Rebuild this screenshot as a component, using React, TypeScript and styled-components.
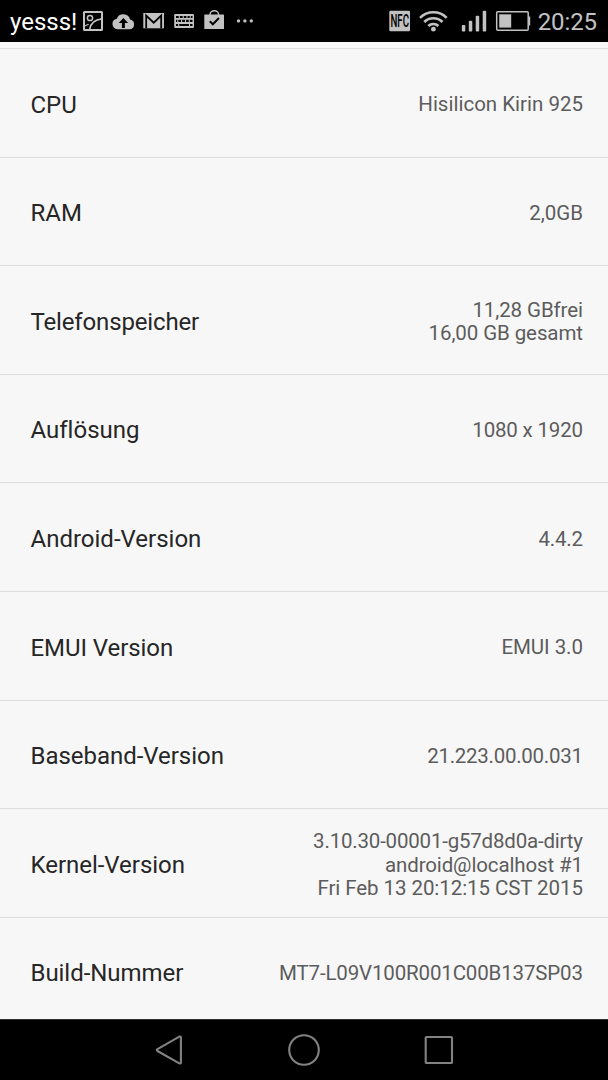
import React from 'react';
import styled, { createGlobalStyle } from 'styled-components';

const GlobalStyle = createGlobalStyle`
  * { box-sizing: border-box; }
  body {
    margin: 0;
    background: #f7f7f7;
    font-family: Roboto, "Noto Sans", sans-serif;
    font-variant-ligatures: none;
  }
`;

const Screen = styled.div`
  display: flex;
  flex-direction: column;
  width: 608px;
  height: 1080px;
  overflow: hidden;
  background: #f7f7f7;
`;

const StatusBar = styled.header`
  display: flex;
  flex: none;
  justify-content: space-between;
  height: 42px;
  padding: 0 11px 0 10px;
  background: #000;
`;

const StatusGroup = styled.div`
  display: flex;
  align-items: center;
  height: 42px;
`;

const Carrier = styled.span`
  width: 69px;
  padding-top: 2px;
  color: #fff;
  font-size: 24px;
  line-height: 42px;
  white-space: nowrap;
`;

const Clock = styled.span`
  width: 60px;
  padding-top: 2px;
  color: #c2c2c2;
  font-size: 24px;
  line-height: 42px;
  letter-spacing: -0.1px;
  text-align: right;
  white-space: nowrap;
`;

const Icon = styled.svg`
  display: block;
  flex: none;
`;

const NfcText = styled.text`
  font-family: Roboto, sans-serif;
  font-size: 18px;
  font-weight: 500;
`;

const Settings = styled.main`
  flex: 1;
  min-height: 0;
  padding-top: 6px;
  overflow: hidden;
`;

const Row = styled.section`
  display: flex;
  align-items: center;
  justify-content: space-between;
  height: 108.6px;
  padding: 3.6px 25px 0 30.5px;
  border-top: 1px solid #dedede;
`;

const Label = styled.span<{ $spacing: number }>`
  color: #262626;
  font-size: 24px;
  line-height: 28px;
  letter-spacing: ${(p) => p.$spacing}px;
  white-space: nowrap;
`;

const Values = styled.div`
  display: flex;
  flex-direction: column;
  align-items: flex-end;
  padding-top: 1px;
`;

const Value = styled.span<{ $spacing: number }>`
  color: #5c5c5c;
  font-size: 20.5px;
  line-height: 23.5px;
  letter-spacing: ${(p) => p.$spacing}px;
  margin-right: ${(p) => -p.$spacing}px;
  white-space: nowrap;
`;

const NavBar = styled.nav`
  display: flex;
  flex: none;
  align-items: center;
  justify-content: center;
  gap: 103px;
  height: 61px;
  border-top: 1px solid #303030;
  background: #000;
`;

type Line = [text: string, spacing: number];

const rows: { label: Line; values: Line[] }[] = [
  { label: ['CPU', 0], values: [['Hisilicon Kirin 925', 0]] },
  { label: ['RAM', 0], values: [['2,0GB', 0]] },
  { label: ['Telefonspeicher', -0.15], values: [['11,28 GBfrei', -0.1], ['16,00 GB gesamt', -0.1]] },
  { label: ['Auflösung', 0], values: [['1080 x 1920', -0.18]] },
  { label: ['Android-Version', 0], values: [['4.4.2', -0.2]] },
  { label: ['EMUI Version', -0.07], values: [['EMUI 3.0', -0.05]] },
  { label: ['Baseband-Version', -0.03], values: [['21.223.00.00.031', -0.27]] },
  {
    label: ['Kernel-Version', -0.03],
    values: [
      ['3.10.30-00001-g57d8d0a-dirty', -0.2],
      ['android@localhost #1', -0.13],
      ['Fri Feb 13 20:12:15 CST 2015', -0.07],
    ],
  },
  { label: ['Build-Nummer', -0.05], values: [['MT7-L09V100R001C00B137SP03', -0.15]] },
];

const grey = '#c2c2c2';

const NotificationIcons = () => (
  <Icon width="178" height="42" viewBox="79 0 178 42" fill="none">
    <rect x="84" y="12" width="18" height="18" rx="0.5" stroke={grey} strokeWidth="2" />
    <circle cx="90" cy="18" r="2.6" stroke={grey} strokeWidth="1.5" />
    <path d="M84.500 26l4.200-1.700" stroke={grey} strokeWidth="1.200" />
    <path d="M89.600 29.500c.8-5.500 5-10 12.400-10.700" stroke={grey} strokeWidth="1.700" />
    <path
      d="M117.500 29.300a5.300 5.300 0 0 1-.7-10.500a7 7 0 0 1 13.300.8a4.900 4.900 0 0 1-.6 9.700z"
      fill={grey}
    />
    <path d="M123.400 18l-4.700 4.900h3.200v5h3v-5h3.200z" fill="#000" />
    <rect x="143.300" y="13" width="20.700" height="15.300" fill={grey} />
    <path d="M146.200 28.300V15.500l7.500 7.200l7.500-7.200v12.800" stroke="#000" strokeWidth="1.800" />
    <rect x="174.200" y="14" width="19.800" height="14" rx="1.200" fill={grey} />
    <path d="M176 17h16.500M176 20.800h16.500M176 25h16.500" stroke="#000" strokeWidth="2.200" />
    <path
      d="M179.300 15.500v3M183.200 15.500v3M187 15.500v3M190.200 15.500v3M177.800 19.500v3M181.600 19.500v3M185.500 19.500v3M189.300 19.500v3M178.700 23.500v3M189.500 23.500v3"
      stroke={grey}
      strokeWidth="1.100"
    />
    <path d="M210 15v-.5a4.300 3.800 0 0 1 8.600 0v.5" stroke={grey} strokeWidth="1.400" />
    <rect x="204.300" y="14.500" width="19.700" height="14.600" rx="0.600" fill={grey} />
    <path d="M209.800 21.300l3 3l6.200-6.300" stroke="#000" strokeWidth="2" />
    <g fill={grey}>
      <circle cx="238.500" cy="20.900" r="1.700" />
      <circle cx="244.900" cy="20.900" r="1.700" />
      <circle cx="251.300" cy="20.900" r="1.700" />
    </g>
  </Icon>
);

const SystemIcons = () => (
  <Icon width="150" height="42" viewBox="387 0 150 42" fill="none">
    <rect x="389.300" y="10.700" width="20.700" height="20.500" rx="1.200" fill={grey} />
    <NfcText x="390.500" y="27.300" textLength="18.500" lengthAdjust="spacingAndGlyphs" fill="#000">
      NFC
    </NfcText>
    <g stroke={grey} strokeWidth="2.500">
      <path d="M420 17.800a18.700 18.700 0 0 1 26.700 0" />
      <path d="M424.200 22a12.900 12.900 0 0 1 18.300 0" />
      <path d="M428.300 26a7.200 7.200 0 0 1 10.100 0" />
    </g>
    <circle cx="433.400" cy="29.200" r="2.400" fill={grey} />
    <g fill={grey}>
      <rect x="461.800" y="25" width="3.500" height="6.500" rx="1" />
      <rect x="468.800" y="20.700" width="3.500" height="10.800" rx="1" />
      <rect x="475.700" y="15.700" width="3.500" height="15.800" rx="1" />
      <rect x="482.700" y="10.700" width="3.500" height="20.800" rx="1" />
    </g>
    <rect x="496.700" y="11.700" width="31.500" height="18.600" rx="1" stroke={grey} strokeWidth="1.500" />
    <rect x="499.200" y="14.300" width="12" height="13.300" fill={grey} />
    <path d="M528.500 16.500h1.700v9h-1.700z" fill={grey} />
  </Icon>
);

const navStroke = { stroke: '#828282', strokeWidth: 2.1, fill: 'none' };

export default function App() {
  return (
    <Screen>
      <GlobalStyle />
      <StatusBar>
        <StatusGroup>
          <Carrier>yesss!</Carrier>
          <NotificationIcons />
        </StatusGroup>
        <StatusGroup>
          <SystemIcons />
          <Clock>20:25</Clock>
        </StatusGroup>
      </StatusBar>
      <Settings>
        {rows.map(({ label, values }) => (
          <Row key={label[0]}>
            <Label $spacing={label[1]}>{label[0]}</Label>
            <Values>
              {values.map(([text, spacing]) => (
                <Value key={text} $spacing={spacing}>
                  {text}
                </Value>
              ))}
            </Values>
          </Row>
        ))}
      </Settings>
      <NavBar>
        <Icon width="32" height="32" viewBox="0 0 32 32">
          <path d="M4.500 15.100L26.300 2.600Q27.900 2 27.900 3.600V28.400Q27.900 30 26.300 29.300L4.500 17Q3 16 4.500 15.100z" {...navStroke} />
        </Icon>
        <Icon width="32" height="32" viewBox="0 0 32 32">
          <circle cx="16" cy="16" r="14.800" {...navStroke} />
        </Icon>
        <Icon width="32" height="32" viewBox="0 0 32 32">
          <rect x="2.700" y="3" width="26.300" height="26" rx="0.800" {...navStroke} />
        </Icon>
      </NavBar>
    </Screen>
  );
}
